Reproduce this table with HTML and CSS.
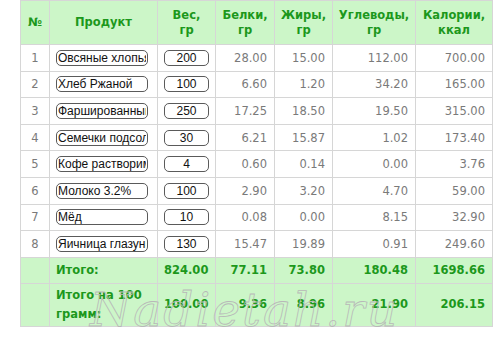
FILE: index.html
```html
<!DOCTYPE html>
<html>
<head>
<meta charset="utf-8">
<link rel="stylesheet" href="styles.css">
</head>
<body>
<div class="wrap">
<table class="calc">
  <colgroup>
    <col class="c-num"><col class="c-prod"><col class="c-w"><col class="c-b"><col class="c-f"><col class="c-u"><col class="c-k">
  </colgroup>
  <thead>
    <tr class="head">
      <th>№</th><th>Продукт</th><th>Вес,<br>гр</th><th>Белки,<br>гр</th><th>Жиры,<br>гр</th><th>Углеводы,<br>гр</th><th>Калории,<br>ккал</th>
    </tr>
  </thead>
  <tbody>
    <tr><td class="n">1</td><td class="p"><input class="in-prod" value="Овсяные хлопья"></td><td class="w"><input class="in-w" value="200"></td><td>28.00</td><td>15.00</td><td>112.00</td><td>700.00</td></tr>
    <tr><td class="n">2</td><td class="p"><input class="in-prod" value="Хлеб Ржаной"></td><td class="w"><input class="in-w" value="100"></td><td>6.60</td><td>1.20</td><td>34.20</td><td>165.00</td></tr>
    <tr><td class="n">3</td><td class="p"><input class="in-prod" value="Фаршированный перец"></td><td class="w"><input class="in-w" value="250"></td><td>17.25</td><td>18.50</td><td>19.50</td><td>315.00</td></tr>
    <tr><td class="n">4</td><td class="p"><input class="in-prod" value="Семечки подсолнечника"></td><td class="w"><input class="in-w" value="30"></td><td>6.21</td><td>15.87</td><td>1.02</td><td>173.40</td></tr>
    <tr><td class="n">5</td><td class="p"><input class="in-prod" value="Кофе растворимый"></td><td class="w"><input class="in-w" value="4"></td><td>0.60</td><td>0.14</td><td>0.00</td><td>3.76</td></tr>
    <tr><td class="n">6</td><td class="p"><input class="in-prod" value="Молоко 3.2%"></td><td class="w"><input class="in-w" value="100"></td><td>2.90</td><td>3.20</td><td>4.70</td><td>59.00</td></tr>
    <tr><td class="n">7</td><td class="p"><input class="in-prod" value="Мёд"></td><td class="w"><input class="in-w" value="10"></td><td>0.08</td><td>0.00</td><td>8.15</td><td>32.90</td></tr>
    <tr><td class="n">8</td><td class="p"><input class="in-prod" value="Яичница глазунья"></td><td class="w"><input class="in-w" value="130"></td><td>15.47</td><td>19.89</td><td>0.91</td><td>249.60</td></tr>
  </tbody>
  <tfoot>
    <tr class="total">
      <td></td><td class="lbl">Итого:</td><td>824.00</td><td>77.11</td><td>73.80</td><td>180.48</td><td>1698.66</td>
    </tr>
    <tr class="total per100">
      <td></td><td class="lbl">Итого на 100 грамм:</td><td>100.00</td><td>9.36</td><td>8.96</td><td>21.90</td><td>206.15</td>
    </tr>
  </tfoot>
</table>
<div class="watermark">Nadietah.ru</div>
</div>
</body>
</html>
```

FILE: styles.css
```css
html, body {
  margin: 0;
  padding: 0;
  background: #ffffff;
}
.wrap {
  position: relative;
  padding-left: 20px;
  width: 480px;
}
.calc {
  border-collapse: collapse;
  table-layout: fixed;
  width: 472px;
  font-family: "DejaVu Sans", Verdana, sans-serif;
  font-size: 11.5px;
  color: #7a7a7a;
}
.c-num { width: 29px; }
.c-prod { width: 108px; }
.c-w { width: 58px; }
.c-b { width: 59px; }
.c-f { width: 58px; }
.c-u { width: 83px; }
.c-k { width: 77px; }

.calc th, .calc td {
  border: 1px solid #d6d6d6;
  padding: 0 7px 0 6px;
}
.head th {
  background: #ccf6c8;
  color: #1c981c;
  font-weight: bold;
  font-size: 11.5px;
  line-height: 15px;
  height: 43px;
  text-align: center;
  padding: 0 2px;
}
tbody td {
  height: 25.6px;
  text-align: right;
  white-space: nowrap;
}
tbody td.n {
  text-align: center;
  padding: 0;
}
tbody td.p {
  text-align: left;
  padding: 0 0 0 6px;
}
tbody td.w {
  text-align: center;
  padding: 0;
}
.in-prod, .in-w {
  box-sizing: border-box;
  height: 16px;
  border: 1px solid #5a5a5a;
  border-radius: 5px;
  background: #ffffff;
  font-family: "Liberation Sans", Arial, sans-serif;
  font-size: 12px;
  color: #111111;
  padding: 0 1px;
  margin: 0;
  vertical-align: middle;
  outline: none;
}
.in-prod {
  width: 92px;
  text-align: left;
}
.in-w {
  width: 45px;
  text-align: center;
}
.total td {
  background: #ccf6c8;
  color: #1c981c;
  font-weight: bold;
  text-align: right;
  height: 25px;
}
.total td.lbl {
  text-align: left;
}
.per100 td {
  height: 42px;
  line-height: 19px;
}
.watermark {
  position: absolute;
  left: 90px;
  top: 282px;
  font-family: "DejaVu Serif", serif;
  font-style: italic;
  font-size: 47px;
  color: transparent;
  -webkit-text-stroke: 0.8px #b8b8b8;
  letter-spacing: 2px;
  pointer-events: none;
}
```
